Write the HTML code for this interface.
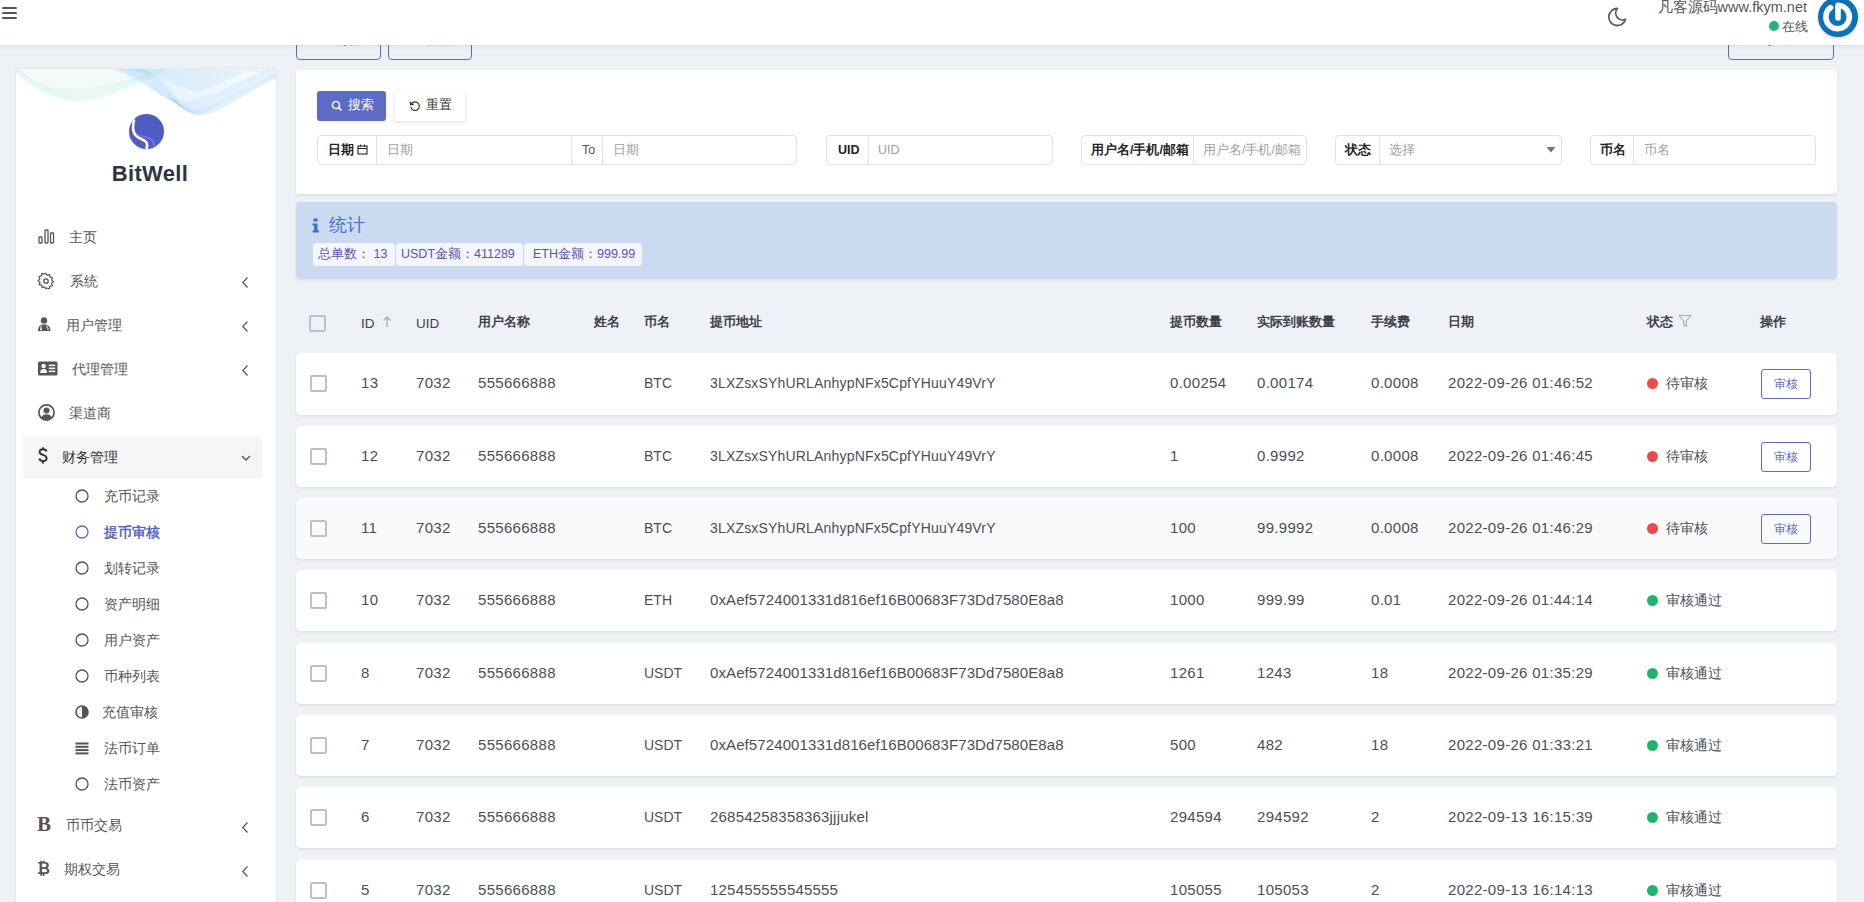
<!DOCTYPE html>
<html><head><meta charset="utf-8">
<style>
*{box-sizing:border-box;margin:0;padding:0}
html,body{width:1864px;height:902px;overflow:hidden}
body{background:#eef1f6;font-family:"Liberation Sans",sans-serif;color:#495057;position:relative}
.a{position:absolute}
.hdr{left:0;top:0;width:1864px;height:45px;background:#fff;box-shadow:0 1px 5px rgba(40,50,70,.10);z-index:10}
.bar{position:absolute;left:2px;width:14.5px;height:2px;background:#555;border-radius:1px}
.topbtn{border:1px solid #5c6bc4;border-radius:4px;height:32px;top:28px;background:transparent}
.side{left:16px;top:69px;width:260px;height:840px;background:#fff;overflow:hidden;box-shadow:0 0 3px rgba(40,50,70,.08)}
.mi{position:absolute;left:0;width:260px;height:20px;font-size:14px;color:#555;line-height:20px}
.mi .t{position:absolute;top:0;white-space:nowrap}
.mi svg{position:absolute}
.chev{position:absolute;left:225px;top:6px;overflow:visible}
.card{left:296px;width:1541px;background:#fff;border-radius:4px;box-shadow:0 2px 3px rgba(40,50,80,.08)}
.btn{position:absolute;height:30px;border-radius:3px;font-size:12.5px;line-height:28px;white-space:nowrap}
.ig{position:absolute;top:135px;height:30px;border:1px solid #dde3ea;border-radius:4px;background:#fff;font-size:12.5px;line-height:28px}
.ig .l{position:absolute;top:0;height:28px;font-weight:bold;color:#222;white-space:nowrap}
.ig .d{position:absolute;top:0;width:1px;height:28px;background:#dde3ea}
.ig .p{position:absolute;top:0;color:#9aa0a6;white-space:nowrap;font-size:12.5px}
.stats{left:296px;top:202px;width:1541px;height:75.5px;background:#cadaf0;border-radius:4px;box-shadow:0 2px 3px rgba(40,50,70,.10)}
.badge{position:absolute;top:41px;height:23px;background:#f5f6fa;border-radius:4px;font-size:12.5px;line-height:23px;color:#5256b0;white-space:nowrap}
.th{position:absolute;top:314px;font-size:13px;font-weight:bold;color:#3a3f4b;white-space:nowrap;line-height:16px}
.cb{position:absolute;width:17px;height:17px;border:2px solid #b9c1ca;border-radius:2px;background:transparent}
.row{position:absolute;left:296px;width:1541px;height:61px;background:#fff;border-radius:5px;box-shadow:0 2px 3px rgba(40,50,80,.08)}
.row .c{position:absolute;top:21px;font-size:14px;line-height:17px;color:#4a4f57;white-space:nowrap}
.dot{position:absolute;top:25px;width:11px;height:11px;border-radius:50%}
.rv{position:absolute;left:1465px;top:16px;width:50px;height:30px;border:1px solid #5c6bc4;border-radius:3px;font-size:12px;line-height:28px;text-align:center;color:#5c6bc4}
</style></head>
<body>

<!-- top buttons (behind header) -->
<div class="a topbtn" style="left:296px;width:85px"><span style="position:absolute;left:22px;top:4px;font-size:13px;color:#5c6bc4;line-height:13px">&#9679;&nbsp; 刷新</span></div>
<div class="a topbtn" style="left:388px;width:84px"><span style="position:absolute;left:22px;top:4px;font-size:13px;color:#5c6bc4;line-height:13px">+&nbsp; 新增</span></div>
<div class="a topbtn" style="left:1728px;width:106px"><span style="position:absolute;left:18px;top:4px;font-size:13px;color:#5c6bc4;line-height:13px">&#9633;&nbsp; 导出</span></div>

<!-- header -->
<div class="a hdr">
  <div class="bar" style="top:7px"></div>
  <div class="bar" style="top:12px"></div>
  <div class="bar" style="top:17px"></div>
  <svg class="a" style="left:1606px;top:6px" width="22" height="22" viewBox="0 0 22 22"><path d="M11.5 2.5 A8.5 8.5 0 1 0 19.5 13.2 A6.8 6.8 0 0 1 11.5 2.5 Z" fill="none" stroke="#5e5e5e" stroke-width="1.8" stroke-linejoin="round"/></svg>
  <div class="a" style="right:57px;top:-2px;font-size:14.5px;color:#555;white-space:nowrap;line-height:18px">凡客源码www.fkym.net</div>
  <div class="a" style="left:1769px;top:21px;width:10px;height:10px;border-radius:50%;background:#22b573"></div>
  <div class="a" style="left:1782px;top:19px;font-size:12.5px;color:#555;line-height:16px;white-space:nowrap">在线</div>
  <div class="a" style="left:1818px;top:-3px;width:40px;height:40px;border-radius:50%;background:#0b72b9;box-shadow:0 1px 3px rgba(0,0,0,.2)"></div>
  <svg class="a" style="left:1822px;top:1px" width="32" height="32" viewBox="0 0 32 32"><path d="M8.6 6.6 A11.7 11.7 0 1 0 16 4.3 L16 17" fill="none" stroke="#fff" stroke-width="5.6" stroke-linecap="round" stroke-linejoin="round"/></svg>
</div>

<!-- sidebar -->
<div class="a side">
  <svg class="a" style="left:0;top:0" width="260" height="50" viewBox="0 0 260 50">
    <defs>
      <linearGradient id="wb" x1="0" x2="1" y1="0" y2="0"><stop offset="0" stop-color="#9ccff8"/><stop offset=".45" stop-color="#bfe0fb"/><stop offset="1" stop-color="#eef8fe"/></linearGradient>
    </defs>
    <path d="M0 0 C18 14 40 32 62 32 C90 32 115 14 150 0 Z" fill="#e3f7f3" opacity=".45"/>
    <path d="M100 0 C130 10 160 40 182 46 C205 40 232 14 262 0 Z" fill="url(#wb)" opacity=".32"/>
    <path d="M110 0 C140 6 165 16 180 24 C200 16 220 6 240 0 Z" fill="#a9d5f8" opacity=".22"/>
    <path d="M200 0 C225 4 245 4 262 0 Z" fill="#e6f8fb" opacity=".8"/>
    <g fill="none"><path d="M0 -2.0 C20 16.0 30.0 20.0 55.0 20.0 C85.0 20.0 120 10.0 150 -2.0" stroke="#bfeee6" stroke-width=".5" opacity=".4"/><path d="M0 -1.5 C20 16.5 30.8 20.9 55.8 20.9 C85.8 20.9 120 10.3 150 -1.7" stroke="#bfeee6" stroke-width=".5" opacity=".4"/><path d="M0 -1.1 C20 16.9 31.5 21.8 56.5 21.8 C86.5 21.8 120 10.6 150 -1.4" stroke="#bfeee6" stroke-width=".5" opacity=".4"/><path d="M0 -0.6 C20 17.4 32.3 22.8 57.3 22.8 C87.3 22.8 120 10.9 150 -1.1" stroke="#bfeee6" stroke-width=".5" opacity=".4"/><path d="M0 -0.2 C20 17.8 33.1 23.7 58.1 23.7 C88.1 23.7 120 11.2 150 -0.8" stroke="#bfeee6" stroke-width=".5" opacity=".4"/><path d="M0 0.3 C20 18.3 33.8 24.6 58.8 24.6 C88.8 24.6 120 11.5 150 -0.5" stroke="#bfeee6" stroke-width=".5" opacity=".4"/><path d="M0 0.8 C20 18.8 34.6 25.5 59.6 25.5 C89.6 25.5 120 11.8 150 -0.2" stroke="#bfeee6" stroke-width=".5" opacity=".4"/><path d="M0 1.2 C20 19.2 35.4 26.5 60.4 26.5 C90.4 26.5 120 12.2 150 0.2" stroke="#bfeee6" stroke-width=".5" opacity=".4"/><path d="M0 1.7 C20 19.7 36.2 27.4 61.2 27.4 C91.2 27.4 120 12.5 150 0.5" stroke="#bfeee6" stroke-width=".5" opacity=".4"/><path d="M0 2.2 C20 20.2 36.9 28.3 61.9 28.3 C91.9 28.3 120 12.8 150 0.8" stroke="#bfeee6" stroke-width=".5" opacity=".4"/><path d="M0 2.6 C20 20.6 37.7 29.2 62.7 29.2 C92.7 29.2 120 13.1 150 1.1" stroke="#bfeee6" stroke-width=".5" opacity=".4"/><path d="M0 3.1 C20 21.1 38.5 30.2 63.5 30.2 C93.5 30.2 120 13.4 150 1.4" stroke="#bfeee6" stroke-width=".5" opacity=".4"/><path d="M0 3.5 C20 21.5 39.2 31.1 64.2 31.1 C94.2 31.1 120 13.7 150 1.7" stroke="#bfeee6" stroke-width=".5" opacity=".4"/><path d="M0 4.0 C20 22.0 40.0 32.0 65.0 32.0 C95.0 32.0 120 14.0 150 2.0" stroke="#bfeee6" stroke-width=".5" opacity=".4"/><path d="M95.0 -1 C130.0 12 145.0 32.0 170.0 32.0 C190.0 32.0 235 6.0 262 -4.0" stroke="#b7dcf9" stroke-width=".5" opacity=".45"/><path d="M96.4 -1 C131.4 12 145.7 32.7 170.7 32.7 C190.7 32.7 235 6.6 262 -3.4" stroke="#b7dcf9" stroke-width=".5" opacity=".45"/><path d="M97.9 -1 C132.9 12 146.3 33.3 171.3 33.3 C191.3 33.3 235 7.1 262 -2.9" stroke="#b7dcf9" stroke-width=".5" opacity=".45"/><path d="M99.3 -1 C134.3 12 147.0 34.0 172.0 34.0 C192.0 34.0 235 7.7 262 -2.3" stroke="#b7dcf9" stroke-width=".5" opacity=".45"/><path d="M100.7 -1 C135.7 12 147.7 34.7 172.7 34.7 C192.7 34.7 235 8.3 262 -1.7" stroke="#b7dcf9" stroke-width=".5" opacity=".45"/><path d="M102.1 -1 C137.1 12 148.3 35.3 173.3 35.3 C193.3 35.3 235 8.9 262 -1.1" stroke="#b7dcf9" stroke-width=".5" opacity=".45"/><path d="M103.6 -1 C138.6 12 149.0 36.0 174.0 36.0 C194.0 36.0 235 9.4 262 -0.6" stroke="#b7dcf9" stroke-width=".5" opacity=".45"/><path d="M105.0 -1 C140.0 12 149.7 36.7 174.7 36.7 C194.7 36.7 235 10.0 262 0.0" stroke="#b7dcf9" stroke-width=".5" opacity=".45"/><path d="M106.4 -1 C141.4 12 150.3 37.3 175.3 37.3 C195.3 37.3 235 10.6 262 0.6" stroke="#b7dcf9" stroke-width=".5" opacity=".45"/><path d="M107.9 -1 C142.9 12 151.0 38.0 176.0 38.0 C196.0 38.0 235 11.1 262 1.1" stroke="#b7dcf9" stroke-width=".5" opacity=".45"/><path d="M109.3 -1 C144.3 12 151.7 38.7 176.7 38.7 C196.7 38.7 235 11.7 262 1.7" stroke="#b7dcf9" stroke-width=".5" opacity=".45"/><path d="M110.7 -1 C145.7 12 152.3 39.3 177.3 39.3 C197.3 39.3 235 12.3 262 2.3" stroke="#b7dcf9" stroke-width=".5" opacity=".45"/><path d="M112.1 -1 C147.1 12 153.0 40.0 178.0 40.0 C198.0 40.0 235 12.9 262 2.9" stroke="#b7dcf9" stroke-width=".5" opacity=".45"/><path d="M113.6 -1 C148.6 12 153.7 40.7 178.7 40.7 C198.7 40.7 235 13.4 262 3.4" stroke="#8fc8f6" stroke-width=".5" opacity=".45"/><path d="M115.0 -1 C150.0 12 154.3 41.3 179.3 41.3 C199.3 41.3 235 14.0 262 4.0" stroke="#8fc8f6" stroke-width=".5" opacity=".45"/><path d="M116.4 -1 C151.4 12 155.0 42.0 180.0 42.0 C200.0 42.0 235 14.6 262 4.6" stroke="#8fc8f6" stroke-width=".5" opacity=".45"/><path d="M117.9 -1 C152.9 12 155.7 42.7 180.7 42.7 C200.7 42.7 235 15.1 262 5.1" stroke="#8fc8f6" stroke-width=".5" opacity=".45"/><path d="M119.3 -1 C154.3 12 156.3 43.3 181.3 43.3 C201.3 43.3 235 15.7 262 5.7" stroke="#8fc8f6" stroke-width=".5" opacity=".45"/><path d="M120.7 -1 C155.7 12 157.0 44.0 182.0 44.0 C202.0 44.0 235 16.3 262 6.3" stroke="#8fc8f6" stroke-width=".5" opacity=".45"/><path d="M122.1 -1 C157.1 12 157.7 44.7 182.7 44.7 C202.7 44.7 235 16.9 262 6.9" stroke="#8fc8f6" stroke-width=".5" opacity=".45"/><path d="M123.6 -1 C158.6 12 158.3 45.3 183.3 45.3 C203.3 45.3 235 17.4 262 7.4" stroke="#8fc8f6" stroke-width=".5" opacity=".45"/><path d="M125.0 -1 C160.0 12 159.0 46.0 184.0 46.0 C204.0 46.0 235 18.0 262 8.0" stroke="#8fc8f6" stroke-width=".5" opacity=".45"/></g>
  </svg>
  <div class="a" style="left:113px;top:45px;width:35px;height:35px;border-radius:50%;background:#4f5dc1;overflow:hidden;box-shadow:0 1px 2px rgba(0,0,0,.1)">
    <svg width="35" height="35" viewBox="0 0 35 35" style="position:absolute;left:0;top:0"><path d="M5.5 18.8 C8.5 22.2 13 22.6 18 23.6 C22.5 24.6 25 27 24.8 31.5" fill="none" stroke="#7a66f0" stroke-width="2.6"/><path d="M5.2 5.5 C3.2 13 3.6 19.5 8.5 23 C12 25.5 16 25.8 17.6 28.6 C18.6 30.5 18.2 32.5 17.4 35" fill="none" stroke="#fff" stroke-width="2.6"/></svg>
  </div>
  <div class="a" style="left:0;top:92px;width:268px;text-align:center;font-size:22px;font-weight:bold;color:#2d3545;line-height:26px;letter-spacing:.3px">BitWell</div>

  <!-- menu -->
  <div class="mi" style="top:158px">
    <svg style="left:22px;top:2px" width="17" height="15" viewBox="0 0 17 15"><rect x="1" y="8" width="3" height="6" rx=".8" fill="none" stroke="#555" stroke-width="1.3"/><rect x="7" y="1" width="3" height="13" rx=".8" fill="none" stroke="#555" stroke-width="1.3"/><rect x="12.5" y="4" width="3" height="10" rx=".8" fill="none" stroke="#555" stroke-width="1.3"/></svg>
    <span class="t" style="left:53px">主页</span>
  </div>
  <div class="mi" style="top:202px">
    <svg style="left:21px;top:1px" width="18" height="18" viewBox="0 0 18 18"><path d="M9 1.2l1.3 2.1 2.4-.7.4 2.5 2.4.7-.9 2.3 1.8 1.7-1.9 1.6.8 2.4-2.5.5-.5 2.5-2.3-.8L9 16.8l-1.5-2-2.3.8-.5-2.5-2.5-.5.8-2.4L1.1 8.6l1.8-1.7L2 4.6l2.4-.7.4-2.5 2.4.7z" fill="none" stroke="#555" stroke-width="1.2" stroke-linejoin="round"/><circle cx="9" cy="9" r="2.2" fill="none" stroke="#555" stroke-width="1.3"/></svg>
    <span class="t" style="left:54px">系统</span>
    <svg class="chev" width="10" height="11" viewBox="0 0 10 11"><path d="M6.5 0.5 L1.8 5.5 L6.5 10.5" fill="none" stroke="#555" stroke-width="1.2"/></svg>
  </div>
  <div class="mi" style="top:246px">
    <svg style="left:21px;top:2px" width="15" height="15" viewBox="0 0 15 15"><circle cx="7" cy="3.4" r="3.2" fill="#555"/><path d="M1 14 C1 9.5 3 7.6 7 7.6 C11 7.6 13.5 9.5 13.5 14 Z" fill="#555"/><path d="M4 8.5 L4 11.5 M10 8.5 L10 10.5 C11 10.5 11.2 11.5 11 13" fill="none" stroke="#fff" stroke-width="1"/><circle cx="4" cy="12.3" r="1" fill="#fff"/></svg>
    <span class="t" style="left:50px">用户管理</span>
    <svg class="chev" width="10" height="11" viewBox="0 0 10 11"><path d="M6.5 0.5 L1.8 5.5 L6.5 10.5" fill="none" stroke="#555" stroke-width="1.2"/></svg>
  </div>
  <div class="mi" style="top:290px">
    <svg style="left:22px;top:2px" width="20" height="15" viewBox="0 0 20 15"><rect x="0" y="0.5" width="19.5" height="14" rx="1.5" fill="#555"/><circle cx="5.6" cy="5" r="2.2" fill="#fff"/><path d="M2.2 12 C2.2 8.8 3.6 8 5.6 8 C7.6 8 9 8.8 9 12Z" fill="#fff"/><rect x="10.8" y="3.6" width="6.4" height="1.5" fill="#fff"/><rect x="10.8" y="6.6" width="6.4" height="1.5" fill="#fff"/><rect x="10.8" y="9.6" width="6.4" height="1.5" fill="#fff"/></svg>
    <span class="t" style="left:56px">代理管理</span>
    <svg class="chev" width="10" height="11" viewBox="0 0 10 11" style="top:6px"><path d="M6.5 0.5 L1.8 5.5 L6.5 10.5" fill="none" stroke="#555" stroke-width="1.2"/></svg>
  </div>
  <div class="mi" style="top:334px">
    <svg style="left:22px;top:1px" width="17" height="17" viewBox="0 0 17 17"><circle cx="8.5" cy="8.5" r="7.6" fill="none" stroke="#555" stroke-width="1.7"/><circle cx="8.5" cy="6.6" r="3" fill="#555"/><path d="M3.3 13.6 C4.2 11 6 10.2 8.5 10.2 C11 10.2 12.8 11 13.7 13.6 C12.3 15 10.5 15.8 8.5 15.8 C6.5 15.8 4.7 15 3.3 13.6Z" fill="#555"/></svg>
    <span class="t" style="left:53px">渠道商</span>
  </div>
  <div class="a" style="left:7px;top:368px;width:239px;height:41px;background:#f6f6f8"></div>
  <div class="mi" style="top:378px">
    <svg style="left:22px;top:-0.5px" width="10" height="17" viewBox="0 0 10 17"><path d="M8.6 4.6 C8.2 3 7 2.3 5 2.3 C2.9 2.3 1.6 3.3 1.6 4.9 C1.6 6.7 3.2 7.3 5 7.9 C7 8.5 8.6 9.3 8.6 11.3 C8.6 13.1 7.2 14.1 5 14.1 C2.9 14.1 1.7 13.2 1.3 11.6" fill="none" stroke="#333" stroke-width="1.9"/><path d="M5 0.3 V2.6 M5 13.8 V16.6" stroke="#333" stroke-width="1.9"/></svg>
    <span class="t" style="left:46px;color:#333">财务管理</span>
    <svg class="chev" width="10" height="10" viewBox="0 0 10 10" style="top:6px"><path d="M1 3 L5 7 L9 3" fill="none" stroke="#555" stroke-width="1.4"/></svg>
  </div>
  <div class="mi" style="top:417px"><svg style="left:59px;top:3px" width="14" height="14" viewBox="0 0 14 14"><circle cx="7" cy="7" r="6" fill="none" stroke="#555" stroke-width="1.3"/></svg><span class="t" style="left:88px">充币记录</span></div>
  <div class="mi" style="top:453px;color:#5c6bc4;font-weight:bold"><svg style="left:59px;top:3px" width="14" height="14" viewBox="0 0 14 14"><circle cx="7" cy="7" r="6" fill="none" stroke="#5c6bc4" stroke-width="1.3"/></svg><span class="t" style="left:88px">提币审核</span></div>
  <div class="mi" style="top:489px"><svg style="left:59px;top:3px" width="14" height="14" viewBox="0 0 14 14"><circle cx="7" cy="7" r="6" fill="none" stroke="#555" stroke-width="1.3"/></svg><span class="t" style="left:88px">划转记录</span></div>
  <div class="mi" style="top:525px"><svg style="left:59px;top:3px" width="14" height="14" viewBox="0 0 14 14"><circle cx="7" cy="7" r="6" fill="none" stroke="#555" stroke-width="1.3"/></svg><span class="t" style="left:88px">资产明细</span></div>
  <div class="mi" style="top:561px"><svg style="left:59px;top:3px" width="14" height="14" viewBox="0 0 14 14"><circle cx="7" cy="7" r="6" fill="none" stroke="#555" stroke-width="1.3"/></svg><span class="t" style="left:88px">用户资产</span></div>
  <div class="mi" style="top:597px"><svg style="left:59px;top:3px" width="14" height="14" viewBox="0 0 14 14"><circle cx="7" cy="7" r="6" fill="none" stroke="#555" stroke-width="1.3"/></svg><span class="t" style="left:88px">币种列表</span></div>
  <div class="mi" style="top:633px"><svg style="left:59px;top:3px" width="14" height="14" viewBox="0 0 14 14"><circle cx="7" cy="7" r="6" fill="none" stroke="#555" stroke-width="1.6"/><path d="M7 1 A6 6 0 0 1 7 13Z" fill="#555"/></svg><span class="t" style="left:86px">充值审核</span></div>
  <div class="mi" style="top:669px"><svg style="left:59px;top:3px" width="14" height="14" viewBox="0 0 14 14"><rect x="0.5" y="1.5" width="13" height="2" fill="#555"/><rect x="0.5" y="4.8" width="13" height="2" fill="#555"/><rect x="0.5" y="8.1" width="13" height="2" fill="#555"/><rect x="0.5" y="11.4" width="13" height="2" fill="#555"/></svg><span class="t" style="left:88px">法币订单</span></div>
  <div class="mi" style="top:705px"><svg style="left:59px;top:3px" width="14" height="14" viewBox="0 0 14 14"><circle cx="7" cy="7" r="6" fill="none" stroke="#555" stroke-width="1.3"/></svg><span class="t" style="left:88px">法币资产</span></div>
  <div class="mi" style="top:746px"><span class="t" style="left:21px;font-family:'Liberation Serif',serif;font-weight:bold;font-size:21px;color:#555;top:-1px">B</span><span class="t" style="left:50px">币币交易</span>
    <svg class="chev" width="10" height="11" viewBox="0 0 10 11" style="top:7px"><path d="M6.5 0.5 L1.8 5.5 L6.5 10.5" fill="none" stroke="#555" stroke-width="1.2"/></svg></div>
  <div class="mi" style="top:790px"><span class="t" style="left:21px;font-weight:bold;font-size:16px;color:#555;top:0">₿</span><span class="t" style="left:48px">期权交易</span>
    <svg class="chev" width="10" height="11" viewBox="0 0 10 11" style="top:7px"><path d="M6.5 0.5 L1.8 5.5 L6.5 10.5" fill="none" stroke="#555" stroke-width="1.2"/></svg></div>
</div>

<!-- search card -->
<div class="a card" style="top:70px;height:124px">
</div>
<div class="btn" style="left:317px;top:91px;width:69px;background:#5c6bc4;color:#fff;box-shadow:0 1px 2px rgba(0,0,0,.1)">
  <svg style="position:absolute;left:14px;top:9px" width="12" height="12" viewBox="0 0 12 12"><circle cx="5" cy="5" r="3.6" fill="none" stroke="#fff" stroke-width="1.5"/><path d="M7.6 7.6 L10 10" stroke="#fff" stroke-width="1.6" stroke-linecap="round"/></svg>
  <span style="position:absolute;left:31px;top:0">搜索</span>
</div>
<div class="btn" style="left:395px;top:91px;width:70px;background:#fff;color:#333;border-radius:2px;box-shadow:0 1px 4px rgba(0,0,0,.15)">
  <svg style="position:absolute;left:14px;top:9px" width="12" height="12" viewBox="0 0 12 12"><path d="M2.2 4.2 A4.3 4.3 0 1 1 1.8 7" fill="none" stroke="#333" stroke-width="1.2"/><path d="M1 1.5 L1.6 4.8 L4.8 4.2" fill="none" stroke="#333" stroke-width="1.2"/></svg>
  <span style="position:absolute;left:31px;top:0">重置</span>
</div>

<div class="ig" style="left:317px;width:480px">
  <span class="l" style="left:10px">日期 <svg width="11" height="11" viewBox="0 0 11 11" style="vertical-align:-1px"><rect x="1" y="2" width="9" height="8" fill="none" stroke="#222" stroke-width="1.1"/><line x1="1" y1="4.5" x2="10" y2="4.5" stroke="#222" stroke-width="1"/><line x1="3.5" y1="0.5" x2="3.5" y2="2.5" stroke="#222"/><line x1="7.5" y1="0.5" x2="7.5" y2="2.5" stroke="#222"/></svg></span>
  <div class="d" style="left:58px"></div>
  <span class="p" style="left:69px">日期</span>
  <div class="d" style="left:253px"></div>
  <span class="p" style="left:264px;color:#555">To</span>
  <div class="d" style="left:284px"></div>
  <span class="p" style="left:295px">日期</span>
</div>
<div class="ig" style="left:826px;width:227px">
  <span class="l" style="left:11px">UID</span>
  <div class="d" style="left:41px"></div>
  <span class="p" style="left:51px">UID</span>
</div>
<div class="ig" style="left:1081px;width:226px">
  <span class="l" style="left:9px">用户名/手机/邮箱</span>
  <div class="d" style="left:111px"></div>
  <span class="p" style="left:121px">用户名/手机/邮箱</span>
</div>
<div class="ig" style="left:1335px;width:227px">
  <span class="l" style="left:9px">状态</span>
  <div class="d" style="left:43px"></div>
  <span class="p" style="left:53px">选择</span>
  <svg style="position:absolute;left:210px;top:10px" width="10" height="8" viewBox="0 0 10 8"><path d="M0.5 1 L9.5 1 L5 6.5Z" fill="#777"/></svg>
</div>
<div class="ig" style="left:1590px;width:226px">
  <span class="l" style="left:9px">币名</span>
  <div class="d" style="left:42px"></div>
  <span class="p" style="left:53px">币名</span>
</div>

<!-- stats -->
<div class="a stats">
  <svg class="a" style="left:16px;top:16px" width="8" height="15" viewBox="0 0 8 15"><rect x="1.5" y="0.5" width="4" height="3" fill="#3d6fd1"/><path d="M0.5 5.5 H5.5 V12.5 H7 V14.5 H0.5 V12.5 H2 V7.5 H0.5Z" fill="#3d6fd1"/></svg>
  <div class="a" style="left:33px;top:12px;font-size:18px;line-height:22px;color:#4470cc">统计</div>
  <div class="badge" style="left:17px;width:82px"><span style="position:absolute;left:5px">总单数： 13</span></div>
  <div class="badge" style="left:100px;width:127px"><span style="position:absolute;left:5px">USDT金额：411289</span></div>
  <div class="badge" style="left:228px;width:118px"><span style="position:absolute;left:9px">ETH金额：999.99</span></div>
</div>

<!-- table header -->
<div class="cb" style="left:309px;top:315px"></div>
<div class="th" style="left:361px;top:316px;font-weight:normal;font-size:13.5px">ID</div>
<svg class="a" style="left:382px;top:315px" width="10" height="13" viewBox="0 0 10 13"><path d="M5 12 V2 M1.5 5.5 L5 2 L8.5 5.5" fill="none" stroke="#a5acb5" stroke-width="1.3"/></svg>
<div class="th" style="left:416px;top:316px;font-weight:normal;font-size:13.5px">UID</div>
<div class="th" style="left:478px">用户名称</div>
<div class="th" style="left:594px">姓名</div>
<div class="th" style="left:644px">币名</div>
<div class="th" style="left:710px">提币地址</div>
<div class="th" style="left:1170px">提币数量</div>
<div class="th" style="left:1257px">实际到账数量</div>
<div class="th" style="left:1371px">手续费</div>
<div class="th" style="left:1448px">日期</div>
<div class="th" style="left:1647px">状态</div>
<svg class="a" style="left:1678px;top:314px" width="14" height="14" viewBox="0 0 14 14"><path d="M1 1.5 H13 L8.3 7 V12.5 L5.7 11 V7 Z" fill="none" stroke="#a5acb5" stroke-width="1.1" stroke-linejoin="round"/></svg>
<div class="th" style="left:1760px">操作</div>

<!--ROWS-->
<div class="row" style="top:353px;height:62px">
  <div class="cb" style="left:14px;top:22px"></div>
  <span class="c" style="left:65px;font-size:15px;letter-spacing:.3px">13</span>
  <span class="c" style="left:120px;font-size:15px;letter-spacing:.3px">7032</span>
  <span class="c" style="left:182px;font-size:15px;letter-spacing:.3px">555666888</span>
  <span class="c" style="left:348px;top:22px">BTC</span>
  <span class="c" style="left:414px;font-size:14px;letter-spacing:.18px;top:22px">3LXZsxSYhURLAnhypNFx5CpfYHuuY49VrY</span>
  <span class="c" style="left:874px;font-size:15px;letter-spacing:.3px">0.00254</span>
  <span class="c" style="left:961px;font-size:15px;letter-spacing:.3px">0.00174</span>
  <span class="c" style="left:1075px;font-size:15px;letter-spacing:.3px">0.0008</span>
  <span class="c" style="left:1152px;font-size:15px;letter-spacing:.3px">2022-09-26 01:46:52</span>
  <div class="dot" style="left:1351px;background:#e94b4b"></div>
  <span class="c" style="left:1370px;top:22px">待审核</span>
  <div class="rv">审核</div>
</div>
<div class="row" style="top:426px">
  <div class="cb" style="left:14px;top:22px"></div>
  <span class="c" style="left:65px;font-size:15px;letter-spacing:.3px">12</span>
  <span class="c" style="left:120px;font-size:15px;letter-spacing:.3px">7032</span>
  <span class="c" style="left:182px;font-size:15px;letter-spacing:.3px">555666888</span>
  <span class="c" style="left:348px;top:22px">BTC</span>
  <span class="c" style="left:414px;font-size:14px;letter-spacing:.18px;top:22px">3LXZsxSYhURLAnhypNFx5CpfYHuuY49VrY</span>
  <span class="c" style="left:874px;font-size:15px;letter-spacing:.3px">1</span>
  <span class="c" style="left:961px;font-size:15px;letter-spacing:.3px">0.9992</span>
  <span class="c" style="left:1075px;font-size:15px;letter-spacing:.3px">0.0008</span>
  <span class="c" style="left:1152px;font-size:15px;letter-spacing:.3px">2022-09-26 01:46:45</span>
  <div class="dot" style="left:1351px;background:#e94b4b"></div>
  <span class="c" style="left:1370px;top:22px">待审核</span>
  <div class="rv">审核</div>
</div>
<div class="row" style="top:498px;background:#f9fafc">
  <div class="cb" style="left:14px;top:22px"></div>
  <span class="c" style="left:65px;font-size:15px;letter-spacing:.3px">11</span>
  <span class="c" style="left:120px;font-size:15px;letter-spacing:.3px">7032</span>
  <span class="c" style="left:182px;font-size:15px;letter-spacing:.3px">555666888</span>
  <span class="c" style="left:348px;top:22px">BTC</span>
  <span class="c" style="left:414px;font-size:14px;letter-spacing:.18px;top:22px">3LXZsxSYhURLAnhypNFx5CpfYHuuY49VrY</span>
  <span class="c" style="left:874px;font-size:15px;letter-spacing:.3px">100</span>
  <span class="c" style="left:961px;font-size:15px;letter-spacing:.3px">99.9992</span>
  <span class="c" style="left:1075px;font-size:15px;letter-spacing:.3px">0.0008</span>
  <span class="c" style="left:1152px;font-size:15px;letter-spacing:.3px">2022-09-26 01:46:29</span>
  <div class="dot" style="left:1351px;background:#e94b4b"></div>
  <span class="c" style="left:1370px;top:22px">待审核</span>
  <div class="rv">审核</div>
</div>
<div class="row" style="top:570px">
  <div class="cb" style="left:14px;top:22px"></div>
  <span class="c" style="left:65px;font-size:15px;letter-spacing:.3px">10</span>
  <span class="c" style="left:120px;font-size:15px;letter-spacing:.3px">7032</span>
  <span class="c" style="left:182px;font-size:15px;letter-spacing:.3px">555666888</span>
  <span class="c" style="left:348px;top:22px">ETH</span>
  <span class="c" style="left:414px;font-size:15px;letter-spacing:.1px">0xAef5724001331d816ef16B00683F73Dd7580E8a8</span>
  <span class="c" style="left:874px;font-size:15px;letter-spacing:.3px">1000</span>
  <span class="c" style="left:961px;font-size:15px;letter-spacing:.3px">999.99</span>
  <span class="c" style="left:1075px;font-size:15px;letter-spacing:.3px">0.01</span>
  <span class="c" style="left:1152px;font-size:15px;letter-spacing:.3px">2022-09-26 01:44:14</span>
  <div class="dot" style="left:1351px;background:#20b46e"></div>
  <span class="c" style="left:1370px;top:22px">审核通过</span>
</div>
<div class="row" style="top:643px">
  <div class="cb" style="left:14px;top:22px"></div>
  <span class="c" style="left:65px;font-size:15px;letter-spacing:.3px">8</span>
  <span class="c" style="left:120px;font-size:15px;letter-spacing:.3px">7032</span>
  <span class="c" style="left:182px;font-size:15px;letter-spacing:.3px">555666888</span>
  <span class="c" style="left:348px;top:22px">USDT</span>
  <span class="c" style="left:414px;font-size:15px;letter-spacing:.1px">0xAef5724001331d816ef16B00683F73Dd7580E8a8</span>
  <span class="c" style="left:874px;font-size:15px;letter-spacing:.3px">1261</span>
  <span class="c" style="left:961px;font-size:15px;letter-spacing:.3px">1243</span>
  <span class="c" style="left:1075px;font-size:15px;letter-spacing:.3px">18</span>
  <span class="c" style="left:1152px;font-size:15px;letter-spacing:.3px">2022-09-26 01:35:29</span>
  <div class="dot" style="left:1351px;background:#20b46e"></div>
  <span class="c" style="left:1370px;top:22px">审核通过</span>
</div>
<div class="row" style="top:715px">
  <div class="cb" style="left:14px;top:22px"></div>
  <span class="c" style="left:65px;font-size:15px;letter-spacing:.3px">7</span>
  <span class="c" style="left:120px;font-size:15px;letter-spacing:.3px">7032</span>
  <span class="c" style="left:182px;font-size:15px;letter-spacing:.3px">555666888</span>
  <span class="c" style="left:348px;top:22px">USDT</span>
  <span class="c" style="left:414px;font-size:15px;letter-spacing:.1px">0xAef5724001331d816ef16B00683F73Dd7580E8a8</span>
  <span class="c" style="left:874px;font-size:15px;letter-spacing:.3px">500</span>
  <span class="c" style="left:961px;font-size:15px;letter-spacing:.3px">482</span>
  <span class="c" style="left:1075px;font-size:15px;letter-spacing:.3px">18</span>
  <span class="c" style="left:1152px;font-size:15px;letter-spacing:.3px">2022-09-26 01:33:21</span>
  <div class="dot" style="left:1351px;background:#20b46e"></div>
  <span class="c" style="left:1370px;top:22px">审核通过</span>
</div>
<div class="row" style="top:787px">
  <div class="cb" style="left:14px;top:22px"></div>
  <span class="c" style="left:65px;font-size:15px;letter-spacing:.3px">6</span>
  <span class="c" style="left:120px;font-size:15px;letter-spacing:.3px">7032</span>
  <span class="c" style="left:182px;font-size:15px;letter-spacing:.3px">555666888</span>
  <span class="c" style="left:348px;top:22px">USDT</span>
  <span class="c" style="left:414px;font-size:15px;letter-spacing:.2px">26854258358363jjjukel</span>
  <span class="c" style="left:874px;font-size:15px;letter-spacing:.3px">294594</span>
  <span class="c" style="left:961px;font-size:15px;letter-spacing:.3px">294592</span>
  <span class="c" style="left:1075px;font-size:15px;letter-spacing:.3px">2</span>
  <span class="c" style="left:1152px;font-size:15px;letter-spacing:.3px">2022-09-13 16:15:39</span>
  <div class="dot" style="left:1351px;background:#20b46e"></div>
  <span class="c" style="left:1370px;top:22px">审核通过</span>
</div>
<div class="row" style="top:860px">
  <div class="cb" style="left:14px;top:22px"></div>
  <span class="c" style="left:65px;font-size:15px;letter-spacing:.3px">5</span>
  <span class="c" style="left:120px;font-size:15px;letter-spacing:.3px">7032</span>
  <span class="c" style="left:182px;font-size:15px;letter-spacing:.3px">555666888</span>
  <span class="c" style="left:348px;top:22px">USDT</span>
  <span class="c" style="left:414px;font-size:15px;letter-spacing:.2px">125455555545555</span>
  <span class="c" style="left:874px;font-size:15px;letter-spacing:.3px">105055</span>
  <span class="c" style="left:961px;font-size:15px;letter-spacing:.3px">105053</span>
  <span class="c" style="left:1075px;font-size:15px;letter-spacing:.3px">2</span>
  <span class="c" style="left:1152px;font-size:15px;letter-spacing:.3px">2022-09-13 16:14:13</span>
  <div class="dot" style="left:1351px;background:#20b46e"></div>
  <span class="c" style="left:1370px;top:22px">审核通过</span>
</div>
<!--/ROWS-->
</body></html>
